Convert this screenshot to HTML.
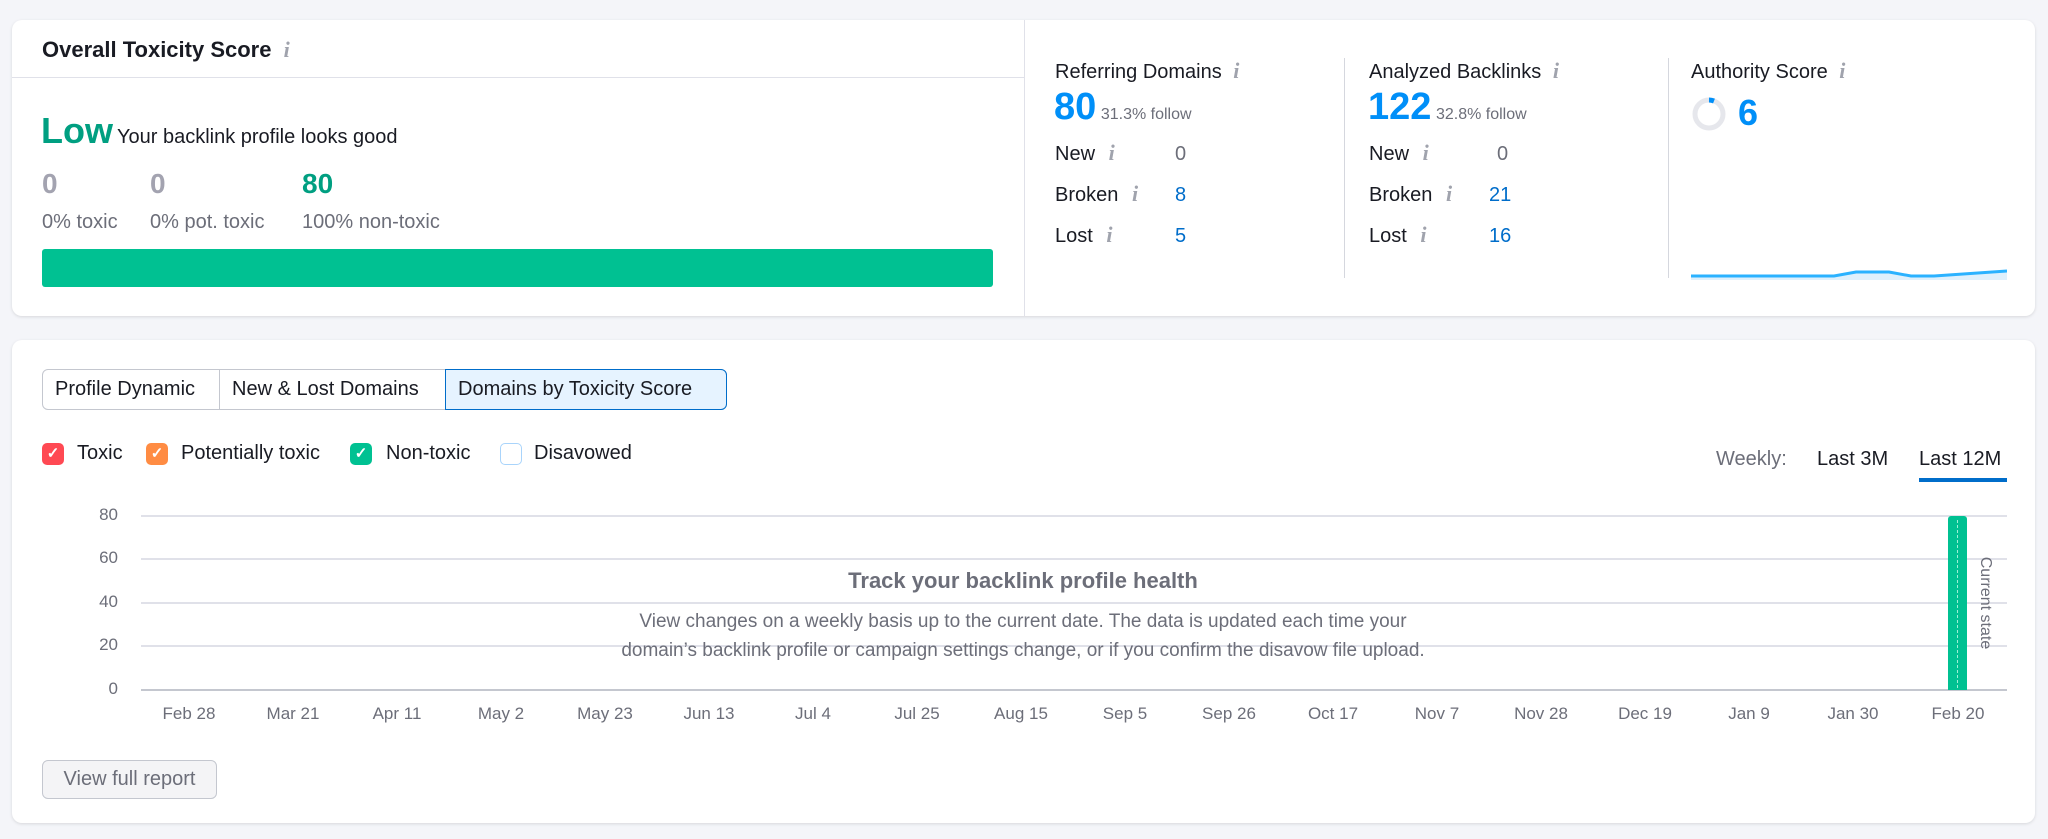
<!DOCTYPE html>
<html><head><meta charset="utf-8"><style>
*{box-sizing:border-box;margin:0;padding:0}
body{width:2048px;height:839px;background:#f4f5f9;font-family:"Liberation Sans",sans-serif;color:#191b23;position:relative;overflow:hidden}
.card{position:absolute;background:#fff;border-radius:10px;box-shadow:0 1px 3px rgba(0,0,0,.12)}
.a{position:absolute;white-space:nowrap;line-height:1.25}
.i{font-family:"Liberation Serif",serif;font-style:italic;color:#a0a3ad;font-size:22px;font-weight:bold;line-height:1}
.g{color:#6c6e79}
.blue{color:#006dca}
.grid{position:absolute;left:141px;width:1866px;height:2px;background:#e0e1e9}
.yl{position:absolute;width:40px;left:78px;text-align:right;font-size:17px;color:#6c6e79}
.xl{position:absolute;top:704px;font-size:17px;color:#6c6e79;width:80px;text-align:center}
.cb{position:absolute;top:443px;width:22px;height:22px;border-radius:5px;color:#fff;font-size:15px;text-align:center;line-height:22px;font-weight:bold}
</style></head><body>
<div class="card" style="left:12px;top:20px;width:2023px;height:296px"></div>
<div style="position:absolute;left:12px;top:77px;width:1012px;height:1px;background:#e0e1e9"></div>
<div style="position:absolute;left:1024px;top:20px;width:1px;height:296px;background:#e0e1e9"></div>
<div class="a" style="left:42px;top:36px;font-size:22px;font-weight:bold">Overall Toxicity Score <span class="i" style="margin-left:6px">i</span></div>
<div class="a" style="left:41px;top:108px;font-size:36px;font-weight:bold;color:#009f81">Low <span style="font-size:20px;font-weight:normal;color:#191b23;margin-left:-6px">Your backlink profile looks good</span></div>
<div class="a" style="left:42px;top:166px;font-size:28px;font-weight:bold;color:#a3a3b0">0</div>
<div class="a" style="left:150px;top:166px;font-size:28px;font-weight:bold;color:#a3a3b0">0</div>
<div class="a" style="left:302px;top:166px;font-size:28px;font-weight:bold;color:#009f81">80</div>
<div class="a g" style="left:42px;top:210px;font-size:20px">0% toxic</div>
<div class="a g" style="left:150px;top:210px;font-size:20px">0% pot. toxic</div>
<div class="a g" style="left:302px;top:210px;font-size:20px">100% non-toxic</div>
<div style="position:absolute;left:42px;top:249px;width:951px;height:38px;background:#00c192;border-radius:3px"></div>

<div style="position:absolute;left:1344px;top:58px;width:1px;height:220px;background:#d5d7de"></div>
<div style="position:absolute;left:1668px;top:58px;width:1px;height:220px;background:#d5d7de"></div>

<div class="a" style="left:1055px;top:60px;font-size:20px">Referring Domains <span class="i" style="margin-left:6px">i</span></div>
<div class="a" style="left:1054px;top:84px;font-size:38px;font-weight:bold;color:#008ff8">80 <span style="font-size:16px;font-weight:normal;color:#6c6e79;margin-left:-6px">31.3% follow</span></div>
<div class="a" style="left:1055px;top:142px;font-size:20px">New <span class="i" style="margin-left:8px">i</span></div>
<div class="a g" style="left:1175px;top:142px;font-size:20px">0</div>
<div class="a" style="left:1055px;top:183px;font-size:20px">Broken <span class="i" style="margin-left:8px">i</span></div>
<div class="a blue" style="left:1175px;top:183px;font-size:20px">8</div>
<div class="a" style="left:1055px;top:224px;font-size:20px">Lost <span class="i" style="margin-left:8px">i</span></div>
<div class="a blue" style="left:1175px;top:224px;font-size:20px">5</div>

<div class="a" style="left:1369px;top:60px;font-size:20px">Analyzed Backlinks <span class="i" style="margin-left:6px">i</span></div>
<div class="a" style="left:1368px;top:84px;font-size:38px;font-weight:bold;color:#008ff8">122 <span style="font-size:16px;font-weight:normal;color:#6c6e79;margin-left:-6px">32.8% follow</span></div>
<div class="a" style="left:1369px;top:142px;font-size:20px">New <span class="i" style="margin-left:8px">i</span></div>
<div class="a g" style="left:1497px;top:142px;font-size:20px">0</div>
<div class="a" style="left:1369px;top:183px;font-size:20px">Broken <span class="i" style="margin-left:8px">i</span></div>
<div class="a blue" style="left:1489px;top:183px;font-size:20px">21</div>
<div class="a" style="left:1369px;top:224px;font-size:20px">Lost <span class="i" style="margin-left:8px">i</span></div>
<div class="a blue" style="left:1489px;top:224px;font-size:20px">16</div>

<div class="a" style="left:1691px;top:60px;font-size:20px">Authority Score <span class="i" style="margin-left:6px">i</span></div>
<svg class="a" style="left:1691px;top:96px" width="36" height="36"><circle cx="18" cy="18" r="14" fill="none" stroke="#e6e7ec" stroke-width="5"/><path d="M18 4 A14 14 0 0 1 23 5" fill="none" stroke="#008ff8" stroke-width="5"/></svg>
<div class="a" style="left:1738px;top:90px;font-size:36px;font-weight:bold;color:#008ff8">6</div>
<svg class="a" style="left:1691px;top:262px" width="316" height="20"><path d="M0 14 L143 14 L165 10 L198 10 L220 14 L243 14 L316 9 L316 18 L0 18Z" fill="#dff0fc"/><path d="M0 14 L143 14 L165 10 L198 10 L220 14 L243 14 L316 9" fill="none" stroke="#2bb2ff" stroke-width="3"/></svg>

<div class="card" style="left:12px;top:340px;width:2023px;height:483px"></div>
<div style="position:absolute;left:42px;top:369px;width:685px;height:41px;border:1px solid #c4c7cf;border-radius:6px"></div>
<div style="position:absolute;left:219px;top:369px;width:1px;height:41px;background:#c4c7cf"></div>
<div style="position:absolute;left:445px;top:369px;width:282px;height:41px;border:1px solid #006dca;border-radius:0 6px 6px 0;background:#e6f3ff"></div>
<div class="a" style="left:55px;top:377px;font-size:20px">Profile Dynamic</div>
<div class="a" style="left:232px;top:377px;font-size:20px">New &amp; Lost Domains</div>
<div class="a" style="left:458px;top:377px;font-size:20px">Domains by Toxicity Score</div>

<div class="cb" style="left:42px;background:#ff4953">✓</div>
<div class="a" style="left:77px;top:441px;font-size:20px">Toxic</div>
<div class="cb" style="left:146px;background:#ff8c43">✓</div>
<div class="a" style="left:181px;top:441px;font-size:20px">Potentially toxic</div>
<div class="cb" style="left:350px;background:#00c192">✓</div>
<div class="a" style="left:386px;top:441px;font-size:20px">Non-toxic</div>
<div class="cb" style="left:500px;border:1.5px solid #a9d4fb;background:#fff"></div>
<div class="a" style="left:534px;top:441px;font-size:20px">Disavowed</div>

<div class="a g" style="left:1716px;top:447px;font-size:20px">Weekly:</div>
<div class="a" style="left:1817px;top:447px;font-size:20px">Last 3M</div>
<div class="a" style="left:1919px;top:447px;font-size:20px">Last 12M</div>
<div style="position:absolute;left:1919px;top:478px;width:88px;height:4px;background:#006dca"></div>

<div class="grid" style="top:515px"></div><div class="grid" style="top:558px"></div><div class="grid" style="top:602px"></div><div class="grid" style="top:645px"></div><div class="grid" style="top:689px;background:#c4c7cf"></div>
<div class="yl" style="top:505px">80</div><div class="yl" style="top:548px">60</div><div class="yl" style="top:592px">40</div><div class="yl" style="top:635px">20</div><div class="yl" style="top:679px">0</div>

<div class="xl" style="left:149px">Feb 28</div><div class="xl" style="left:253px">Mar 21</div><div class="xl" style="left:357px">Apr 11</div><div class="xl" style="left:461px">May 2</div><div class="xl" style="left:565px">May 23</div><div class="xl" style="left:669px">Jun 13</div><div class="xl" style="left:773px">Jul 4</div><div class="xl" style="left:877px">Jul 25</div><div class="xl" style="left:981px">Aug 15</div><div class="xl" style="left:1085px">Sep 5</div><div class="xl" style="left:1189px">Sep 26</div><div class="xl" style="left:1293px">Oct 17</div><div class="xl" style="left:1397px">Nov 7</div><div class="xl" style="left:1501px">Nov 28</div><div class="xl" style="left:1605px">Dec 19</div><div class="xl" style="left:1709px">Jan 9</div><div class="xl" style="left:1813px">Jan 30</div><div class="xl" style="left:1918px">Feb 20</div>

<div style="position:absolute;left:1948px;top:516px;width:19px;height:174px;background:#00c192;border-radius:3px 3px 0 0"></div>
<div style="position:absolute;left:1957px;top:520px;width:0;height:168px;border-left:1px dashed #9ff0d8"></div>
<div class="a g" style="left:1935px;top:593px;width:100px;text-align:center;font-size:16px;transform:rotate(90deg)">Current state</div>

<div class="a" style="left:523px;top:567px;width:1000px;text-align:center;font-size:22px;font-weight:bold;color:#6c6e79">Track your backlink profile health</div>
<div class="a g" style="left:473px;top:607px;width:1100px;text-align:center;font-size:19px;line-height:29px;white-space:normal">View changes on a weekly basis up to the current date. The data is updated each time your<br>domain’s backlink profile or campaign settings change, or if you confirm the disavow file upload.</div>

<div style="position:absolute;left:42px;top:760px;width:175px;height:39px;border:1px solid #c4c7cf;border-radius:6px;background:#f4f4f6;font-size:20px;color:#6c6e79;text-align:center;line-height:37px">View full report</div>
</body></html>
